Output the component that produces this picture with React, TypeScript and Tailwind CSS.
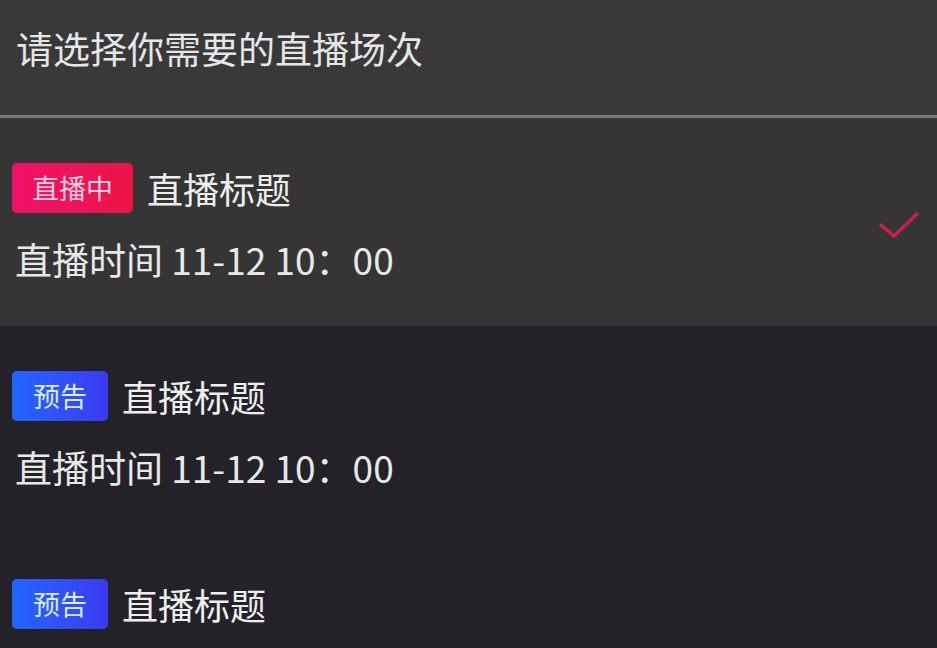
type Session = {
  id: number;
  status: "live" | "preview";
  title: string;
  time: string;
  selected: boolean;
};

const sessions: Session[] = [
  { id: 1, status: "live", title: "直播标题", time: "直播时间 11-12 10：00", selected: true },
  { id: 2, status: "preview", title: "直播标题", time: "直播时间 11-12 10：00", selected: false },
  { id: 3, status: "preview", title: "直播标题", time: "直播时间 11-12 10：00", selected: false },
];

function CheckMark() {
  return (
    <svg width="44" height="36" viewBox="0 0 44 36" fill="none">
      <path d="M4 14 L17 25 L40 3" stroke="#cf1f4c" strokeWidth="3.5" strokeLinecap="round" strokeLinejoin="round" />
    </svg>
  );
}

function Badge({ status }: { status: Session["status"] }) {
  if (status === "live") {
    return (
      <span className="flex h-[50px] items-center rounded-[5px] bg-gradient-to-r from-[#f0106a] to-[#ec1446] px-[20px] text-[27px] text-[#f8d3e2]">
        直播中
      </span>
    );
  }
  return (
    <span className="flex h-[50px] items-center rounded-[5px] bg-gradient-to-r from-[#1f66ff] to-[#3a3af2] px-[21px] text-[27px] text-[#d9ecff]">
      预告
    </span>
  );
}

export default function App() {
  return (
    <div
      className="h-[648px] w-[937px] overflow-hidden bg-[#222228] text-[#ececec]"
      style={{ fontFamily: '"Noto Sans CJK SC", "Noto Sans", sans-serif' }}
    >
      {/* Header */}
      <div className="flex h-[115px] items-center bg-[#393939] pb-[18px] pl-[16px] text-[37px] text-[#e6e6e6]">
        请选择你需要的直播场次
      </div>
      <div className="h-[3px] bg-[#7a7a7a]" />

      {/* Sessions */}
      {sessions.map((s) => (
        <div
          key={s.id}
          className={`flex items-center justify-between pl-[12px] pr-[16px] pt-[45px] pb-[44px] ${
            s.selected ? "bg-[#353535]" : "bg-[#222228]"
          }`}
        >
          <div className="flex flex-col">
            <div className="flex h-[50px] items-center gap-[14px]">
              <Badge status={s.status} />
              <span className="text-[36px] leading-none text-[#eeeeee]">{s.title}</span>
            </div>
            <div className="mt-[26px] mb-[3px] flex h-[40px] items-center pl-[3px] text-[37px] leading-none text-[#e8e8e8]">
              {s.time}
            </div>
          </div>
          {s.selected && (
            <div className="mt-[12px]">
              <CheckMark />
            </div>
          )}
        </div>
      ))}
    </div>
  );
}
